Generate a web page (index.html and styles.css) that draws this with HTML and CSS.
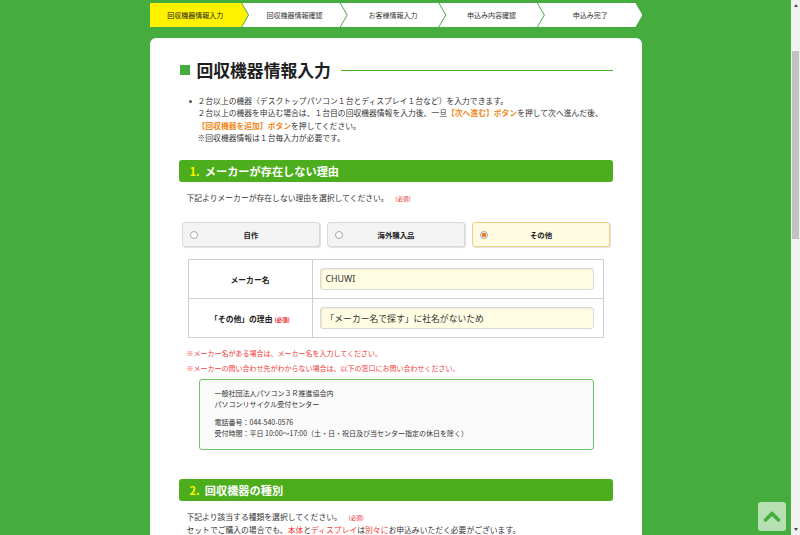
FILE: index.html
```html
<!DOCTYPE html>
<html lang="ja">
<head>
<meta charset="utf-8">
<title>回収機器情報入力</title>
<link rel="stylesheet" href="styles.css">
</head>
<body>
<div class="page">
  <div class="wrap">
    <ol class="steps">
      <li class="step first">回収機器情報入力</li>
      <li class="step">回収機器情報確認</li>
      <li class="step">お客様情報入力</li>
      <li class="step">申込み内容確認</li>
      <li class="step">申込み完了</li>
    </ol>

    <main class="card">
      <div class="title">
        <span class="title-mark"></span>
        <h1>回収機器情報入力</h1>
        <span class="title-line"></span>
      </div>

      <div class="intro">
        <span class="dot"></span>
        <div>
          <p>２台以上の機器（デスクトップパソコン１台とディスプレイ１台など）を入力できます。</p>
          <p>２台以上の機器を申込む場合は、１台目の回収機器情報を入力後、一旦<b class="orange">【次へ進む】ボタン</b>を押して次へ進んだ後、</p>
          <p><b class="orange">【回収機器を追加】ボタン</b>を押してください。</p>
          <p>※回収機器情報は１台毎入力が必要です。</p>
        </div>
      </div>

      <h2 class="sec"><span class="num">1.</span>メーカーが存在しない理由</h2>
      <p class="desc">下記よりメーカーが存在しない理由を選択してください。<span class="req">(必須)</span></p>

      <div class="choices">
        <div class="choice"><span class="radio"></span><span class="label">自作</span></div>
        <div class="choice"><span class="radio"></span><span class="label">海外購入品</span></div>
        <div class="choice on"><span class="radio on"></span><span class="label">その他</span></div>
      </div>

      <table class="form">
        <tr>
          <th>メーカー名</th>
          <td><div class="input latin">CHUWI</div></td>
        </tr>
        <tr>
          <th>「その他」の理由<span class="req small">(必須)</span></th>
          <td><div class="input">「メーカー名で探す」に社名がないため</div></td>
        </tr>
      </table>

      <div class="notes">
        <p>※メーカー名がある場合は、メーカー名を入力してください。</p>
        <p>※メーカーの問い合わせ先がわからない場合は、以下の窓口にお問い合わせください。</p>
      </div>

      <div class="info">
        <p>一般社団法人パソコン３Ｒ推進協会内<br>パソコンリサイクル受付センター</p>
        <p class="gap">電話番号：044-540-0576<br>受付時間：平日 10:00～17:00（土・日・祝日及び当センター指定の休日を除く）</p>
      </div>

      <h2 class="sec sec2"><span class="num">2.</span>回収機器の種別</h2>
      <div class="desc">
        <p>下記より該当する種類を選択してください。<span class="req">(必須)</span></p>
        <p>セットでご購入の場合でも、<span class="red">本体</span>と<span class="red">ディスプレイ</span>は<span class="red">別々に</span>お申込みいただく必要がございます。</p>
      </div>
    </main>
  </div>

  <a class="totop" href="#" aria-label="ページの先頭へ">
    <svg width="28" height="29" viewBox="0 0 28 29"><polyline points="7.5,18 14,11.5 20.5,18" fill="none" stroke="#45ad3d" stroke-width="3.6" stroke-linecap="round" stroke-linejoin="round"/></svg>
  </a>
</div>
<div class="scrollbar">
  <span class="sb-up"></span>
  <span class="sb-thumb"></span>
  <span class="sb-down"></span>
</div>
</body>
</html>
```

FILE: styles.css
```css
* { box-sizing: border-box; }
html, body { height: 100%; }
body {
  margin: 0;
  display: flex;
  overflow: hidden;
  background: #45ad3d;
  font-family: "Noto Sans CJK JP", "Noto Sans", sans-serif;
  color: #333;
}
p { margin: 0; }

.page { flex: 1; height: 100vh; overflow: hidden; }
.wrap { width: 492px; margin: 0 auto; padding-top: 3px; }

/* steps */
.steps { display: flex; list-style: none; margin: 0; padding: 0; height: 24px; }
.step {
  flex: 0 0 auto;
  width: 104.6px;
  height: 24px;
  margin-left: -6px;
  padding: 0 7px;
  background: #fff;
  clip-path: polygon(0 0, calc(100% - 7px) 0, 100% 50%, calc(100% - 7px) 100%, 0 100%, 7px 50%);
  display: flex;
  align-items: center;
  justify-content: center;
  font-size: 7px;
  color: #333;
}
.step.first {
  width: 98.6px;
  margin-left: 0;
  padding: 0 7px 0 0;
  background: #fff100;
  clip-path: polygon(0 0, calc(100% - 7px) 0, 100% 50%, calc(100% - 7px) 100%, 0 100%);
  color: #222;
}

/* card */
.card {
  margin-top: 11px;
  background: #fff;
  border-radius: 6px 6px 0 0;
  padding: 22px 29px 60px;
}
.title { display: flex; align-items: center; height: 20px; }
.title-mark { width: 10px; height: 10px; background: #45ad3d; margin: 0 7px 0 1px; flex: none; }
.title h1 { margin: 0; font-size: 16.8px; line-height: 20px; font-weight: bold; color: #1e1e1e; }
.title-line { flex: 1; height: 1px; background: #4caf1f; margin-left: 10px; }

.intro { display: flex; margin-top: 15px; font-size: 7.8px; line-height: 12.3px; color: #333; }
.dot { flex: none; width: 3px; height: 3px; border-radius: 50%; background: #555; margin: 5px 6px 0 10px; }
.orange { color: #f28a1e; font-weight: bold; }

.sec {
  margin: 16px 0 0;
  height: 22px;
  background: #4cae1c;
  border-radius: 3px;
  color: #fff;
  font-size: 11.2px;
  font-weight: bold;
  display: flex;
  align-items: center;
  padding-left: 11px;
}
.num { color: #fff100; margin-right: 5px; }
.sec2 { margin-top: 29px; }

.desc { margin: 10px 0 0 8px; font-size: 7.8px; line-height: 12px; color: #333; }
.req { color: #e8201c; font-size: 5.6px; margin-left: 7px; font-weight: normal; }
.req.small { margin-left: 2px; font-weight: bold; }
.red { color: #f23a3a; }

/* choices */
.choices { display: flex; gap: 7px; margin: 17px 3px 0 3px; }
.choice {
  flex: 1;
  height: 25px;
  border: 1px solid #d9d9d9;
  border-radius: 3px;
  background: #f3f3f3;
  box-shadow: 1px 1px 1px rgba(0, 0, 0, 0.13);
  display: flex;
  align-items: center;
  padding: 0 14px 0 7px;
  font-size: 7.4px;
  font-weight: bold;
  color: #222;
}
.choice.on { background: #fffbe2; border-color: #f3cf86; }
.radio { flex: none; width: 8px; height: 8px; border: 1px solid #a8a8a8; border-radius: 50%; background: #fff; }
.radio.on { background: radial-gradient(circle, #f27a1c 0 2px, #fff 2.6px); }
.label { flex: 1; text-align: center; }

/* form table */
.form { width: 416px; margin: 12px 9px 0; border-collapse: collapse; }
.form th, .form td { border: 1px solid #cfcfcf; }
.form th { width: 124px; font-size: 7.8px; font-weight: bold; text-align: center; color: #222; }
.form td { padding: 8px 9px 8px 7px; height: 39px; font-weight: normal; }
.input {
  height: 22px;
  border: 1px solid #d8d8d8;
  border-radius: 3px;
  background: #fffde3;
  box-shadow: inset 1px 1px 2px rgba(0, 0, 0, 0.08);
  display: flex;
  align-items: center;
  padding-left: 5px;
  font-size: 8.8px;
  font-weight: normal;
  color: #333;
}
.input.latin { font-family: "Noto Sans", "Liberation Sans", sans-serif; font-size: 8.8px; font-weight: 400; color: #333; }

.notes { margin: 8px 0 0 8px; color: #f03c3c; font-size: 7px; line-height: 15px; }

.info {
  margin: 3px 19px 0 20px;
  border: 1px solid #6fc466;
  border-radius: 3px;
  background: #fafafa;
  padding: 8px 15px 10px;
  font-size: 7px;
  line-height: 11px;
  color: #333;
}
.info .gap { margin-top: 7px; }

/* back to top */
.totop {
  position: fixed;
  right: 14px;
  bottom: 4px;
  width: 28px;
  height: 29px;
  border-radius: 3px;
  background: #b6e0b1;
  display: block;
}
.totop svg { display: block; }

/* scrollbar */
.scrollbar {
  flex: none;
  width: 9px;
  height: 100vh;
  background: #f1f1f1;
  display: flex;
  flex-direction: column;
  align-items: center;
}
.sb-up, .sb-down { width: 0; height: 0; border-left: 2.5px solid transparent; border-right: 2.5px solid transparent; }
.sb-up { border-bottom: 3px solid #505050; margin-top: 4px; }
.sb-thumb { width: 7px; height: 188px; background: #c1c1c1; margin-top: 44px; }
.sb-down { border-top: 3px solid #505050; margin-top: auto; margin-bottom: 4px; }
```
